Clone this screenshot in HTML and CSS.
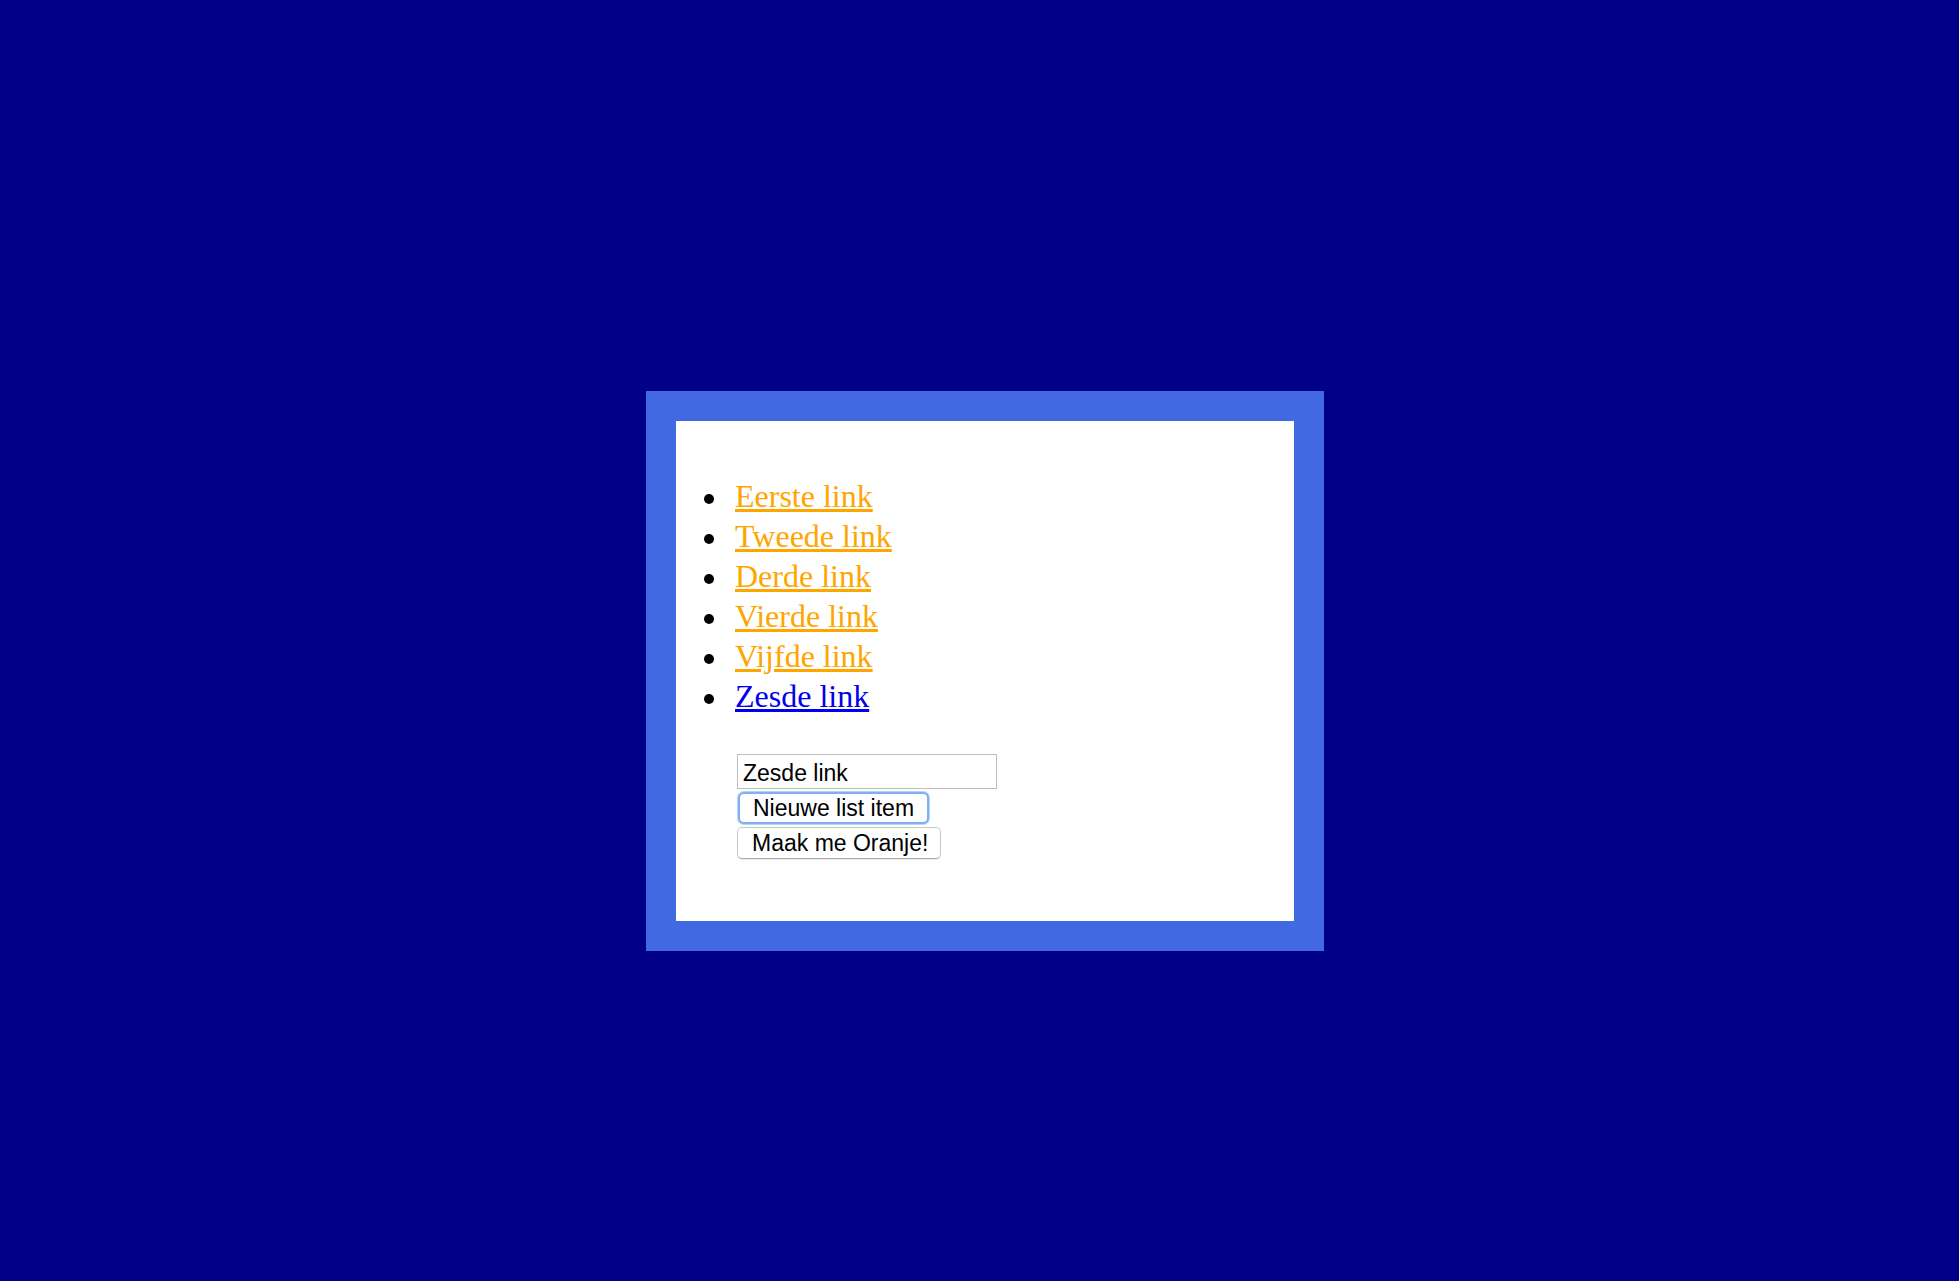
FILE: index.html
```html
<!DOCTYPE html>
<html lang="nl">
<head>
<meta charset="utf-8">
<title>Links</title>
<link rel="stylesheet" href="styles.css">
</head>
<body>
<div class="frame">
  <ul class="links">
    <li><a class="link orange" href="#">Eerste link</a></li>
    <li><a class="link orange" href="#">Tweede link</a></li>
    <li><a class="link orange" href="#">Derde link</a></li>
    <li><a class="link orange" href="#">Vierde link</a></li>
    <li><a class="link orange" href="#">Vijfde link</a></li>
    <li><a class="link plain" href="#">Zesde link</a></li>
  </ul>
  <div class="controls">
    <input class="field" type="text" value="Zesde link">
    <button class="btn btn-focus" type="button">Nieuwe list item</button>
    <button class="btn btn-plain" type="button">Maak me Oranje!</button>
  </div>
</div>
</body>
</html>
```

FILE: styles.css
```css
html, body {
  margin: 0;
  padding: 0;
}

html {
  background: #00008b;
}

body {
  box-sizing: border-box;
  min-height: 1281px;
  padding: 391px 0 0 646px;
  font-family: "Liberation Serif", "Times New Roman", serif;
}

.frame {
  box-sizing: border-box;
  width: 678px;
  height: 560px;
  border: 30px solid #4169e1;
  background: #ffffff;
  padding-top: 55px;
}

.links {
  margin: 0;
  padding: 0 0 0 59px;
  list-style: none;
}

.links li {
  font-size: 32px;
  line-height: 40px;
  color: #000;
}

.links li::before {
  content: "";
  display: inline-block;
  width: 10px;
  height: 10px;
  border-radius: 50%;
  background: #000;
  margin-left: -31px;
  margin-right: 21px;
  vertical-align: 3px;
}

.link {
  text-decoration: underline;
}

.orange {
  color: #ffa500;
}

.plain {
  color: #0000ee;
}

.controls {
  display: flex;
  flex-direction: column;
  align-items: flex-start;
  margin: 38px 0 0 61px;
}

.field {
  box-sizing: border-box;
  width: 260px;
  height: 35px;
  margin: 0;
  padding: 3px 5px 0;
  border: 1px solid #bdbdbd;
  font-family: "Liberation Sans", Arial, sans-serif;
  font-size: 23px;
  color: #000;
  background: #fff;
  outline: none;
}

.btn {
  box-sizing: border-box;
  margin: 0;
  padding: 1px 0 0 14px;
  text-align: left;
  font-family: "Liberation Sans", Arial, sans-serif;
  font-size: 23px;
  color: #000;
  background: #fff;
  cursor: pointer;
}

.btn-focus {
  width: 191px;
  height: 32px;
  margin: 3px 0 0 1px;
  border: 2px solid #7fb1f1;
  border-radius: 6px;
  box-shadow: 0 0 0 1px #b8d3f6;
  padding-left: 13px;
}

.btn-plain {
  width: 204px;
  height: 32px;
  margin-top: 3px;
  border: 1px solid #c8c8c8;
  border-bottom-color: #a9a9a9;
  border-radius: 5px;
  box-shadow: 0 1px 1px rgba(0, 0, 0, 0.08);
}
```
